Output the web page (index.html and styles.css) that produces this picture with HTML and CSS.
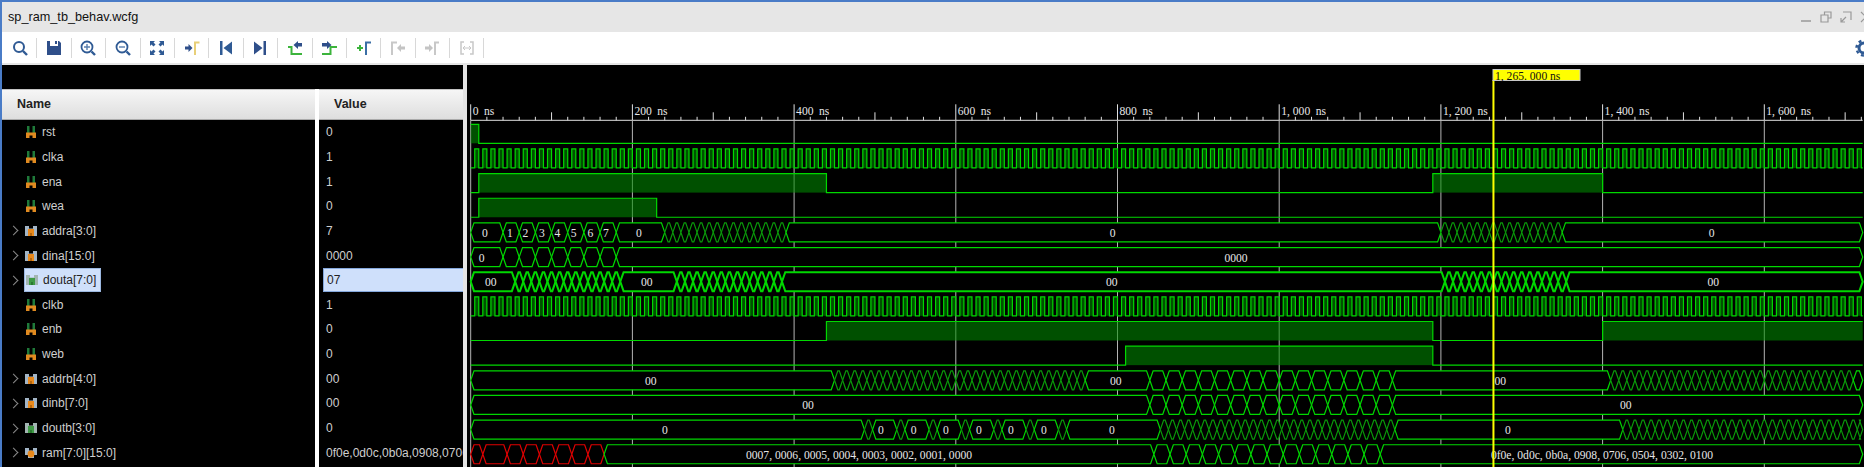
FILE: index.html
```html
<!DOCTYPE html>
<html lang="en">
<head>
  <meta charset="UTF-8" />
  <meta name="viewport" content="width=device-width, initial-scale=1.0" />
  <title>sp_ram_tb_behav.wcfg</title>
  <link rel="stylesheet" href="styles.css">
</head>
<body>

  <svg class="defs" width="0" height="0">
    <symbol id="sig-bit" viewBox="0 0 12 12">
      <path d="M2 0h2.500v7H2zM7.500 0H10v7H7.500z" fill="#1f7a3a"/>
      <path d="M1 6.500h10V12H7.500V9.500h-3V12H1z" fill="#e08a20"/>
    </symbol>
    <symbol id="sig-bus" viewBox="0 0 12 10">
      <path d="M0 0h4v2.500h4V0h4v10H0z" fill="#a3b5c6"/>
      <path d="M3 3h6v7H3z" fill="#e8891c"/>
      <path d="M5 7h2v3H5z" fill="#b5670f"/>
    </symbol>
    <symbol id="sig-out" viewBox="0 0 12 10">
      <path d="M0 0h4v2.500h4V0h4v10H0z" fill="#a3b5b2"/>
      <path d="M3 3h6v7H3z" fill="#3f9a45"/>
      <path d="M5 7h2v3H5z" fill="#2a7a30"/>
    </symbol>
    <symbol id="sig-ram" viewBox="0 0 12 10">
      <path d="M0 0h4v2.500h4V0h4v7H9v3H3V7H0z" fill="#a3b5c6"/>
      <circle cx="6" cy="6" r="3.400" fill="#e8891c"/>
    </symbol>
  </svg>

  <div class="titlebar">
    <span class="title">sp_ram_tb_behav.wcfg</span>
    <div class="win-btns">
      <svg width="12" height="12" viewBox="0 0 12 12"><path d="M1 10h10" stroke="#999" stroke-width="1.5"/></svg>
      <svg width="12" height="12" viewBox="0 0 12 12"><path d="M4.500 3.500V1h6.500v6H8M1 4h7v7H1z" fill="none" stroke="#999" stroke-width="1.200"/></svg>
      <svg width="12" height="12" viewBox="0 0 12 12"><path d="M3 1h8v8M1 11l5-5M1 7v4h4" fill="none" stroke="#999" stroke-width="1.200"/></svg>
      <svg width="12" height="12" viewBox="0 0 12 12"><path d="M1 1l10 10M11 1L1 11" stroke="#999" stroke-width="1.200"/></svg>
    </div>
  </div>

  <div class="toolbar">
    <span class="tool"><svg width="16" height="16" viewBox="0 0 16 16"><circle cx="7" cy="7" r="5" fill="none" stroke="#2f5a94" stroke-width="2"/><path d="M11 11l4 4" stroke="#2f5a94" stroke-width="2.400"/></svg></span>
    <span class="tool"><svg width="16" height="16" viewBox="0 0 16 16"><path d="M1 1h3v5h8V1h1l2 2v12H1z" fill="#2f4f8a"/><path d="M9 1h2v3H9z" fill="#2f4f8a"/></svg></span>
    <span class="tool"><svg width="16" height="16" viewBox="0 0 16 16"><circle cx="7" cy="7" r="5.500" fill="none" stroke="#2f5a94" stroke-width="1.800"/><path d="M11.500 11.500l3.500 3.500" stroke="#2f5a94" stroke-width="2.400"/><path d="M4 7h6M7 4v6" stroke="#5a7fae" stroke-width="1.400"/></svg></span>
    <span class="tool"><svg width="16" height="16" viewBox="0 0 16 16"><circle cx="7" cy="7" r="5.500" fill="none" stroke="#2f5a94" stroke-width="1.800"/><path d="M11.500 11.500l3.500 3.500" stroke="#2f5a94" stroke-width="2.400"/><path d="M4 7h6" stroke="#5a7fae" stroke-width="1.400"/></svg></span>
    <span class="tool"><svg width="16" height="16" viewBox="0 0 16 16"><path d="M1 1h5L4.500 2.500 6.500 4.500 4.500 6.500 2.500 4.500 1 6zM15 1v5l-1.500-1.500-2 2-2-2 2-2L10 1zM1 15v-5l1.500 1.500 2-2 2 2-2 2L6 15zM15 15h-5l1.500-1.500-2-2 2-2 2 2L15 10z" fill="#2f5a94"/></svg></span>
    <span class="tool"><svg width="16" height="16" viewBox="0 0 16 16"><path d="M1 6.500h3.500V4l4 4-4 4V9.500H1z" fill="#2f4f8a"/><path d="M11 15V2.500h4.500" fill="none" stroke="#e8cf78" stroke-width="2"/></svg></span>
    <span class="tool"><svg width="16" height="16" viewBox="0 0 16 16"><path d="M2 1h2.500v14H2zM14 1.500v13L5.500 8z" fill="#2f5a94"/></svg></span>
    <span class="tool"><svg width="16" height="16" viewBox="0 0 16 16"><path d="M14 1h-2.500v14H14zM2 1.500v13L10.500 8z" fill="#2f4f8a"/></svg></span>
    <span class="tool"><svg width="16" height="16" viewBox="0 0 16 16"><path d="M1 7h3.500v7H15" fill="none" stroke="#3cb43c" stroke-width="2"/><path d="M15 3v3.500h-4V9L6.500 5 11 1v2z" fill="#2f4f8a"/></svg></span>
    <span class="tool"><svg width="16" height="16" viewBox="0 0 16 16"><path d="M1 14h8.500V7H16" fill="none" stroke="#3cb43c" stroke-width="2"/><path d="M1 3v3.500h5V9l4.500-4L6 1v2z" fill="#2f4f8a"/></svg></span>
    <span class="tool"><svg width="16" height="16" viewBox="0 0 16 16"><path d="M1 8h6M4 5v6" stroke="#3cb43c" stroke-width="2"/><path d="M10 15V2.500h5" fill="none" stroke="#3a6ea5" stroke-width="2"/></svg></span>
    <span class="tool"><svg width="16" height="16" viewBox="0 0 16 16"><path d="M2 15V2.500h5" fill="none" stroke="#c8c8c8" stroke-width="2"/><path d="M15 6.500v3h-4V12L7 8l4-4v2.500z" fill="#c4c4c4"/></svg></span>
    <span class="tool"><svg width="16" height="16" viewBox="0 0 16 16"><path d="M1 6.500v3h4V12l4-4-4-4v2.500z" fill="#c4c4c4"/><path d="M11 15V2.500h4" fill="none" stroke="#c8c8c8" stroke-width="2"/></svg></span>
    <span class="tool"><svg width="16" height="16" viewBox="0 0 16 16"><path d="M5 2H2v12h3M11 2h3v12h-3" fill="none" stroke="#c8c8c8" stroke-width="1.500"/><path d="M4 8h8M6 6L4 8l2 2M10 6l2 2-2 2" fill="none" stroke="#c8c8c8"/></svg></span>
    <svg class="gear" width="18" height="18" viewBox="0 0 18 18"><circle cx="9" cy="9" r="5" fill="none" stroke="#2f5a94" stroke-width="3"/><circle cx="9" cy="9" r="7.500" fill="none" stroke="#2f5a94" stroke-width="2.500" stroke-dasharray="3 2.900"/></svg>
  </div>

  <div class="panes">
    <div class="names">
      <div class="spacer"></div>
      <div class="col-head">Name</div>
      <div class="row"><span class="chev"></span><svg class="sig" width="12" height="12"><use href="#sig-bit"/></svg><span>rst</span></div>
      <div class="row"><span class="chev"></span><svg class="sig" width="12" height="12"><use href="#sig-bit"/></svg><span>clka</span></div>
      <div class="row"><span class="chev"></span><svg class="sig" width="12" height="12"><use href="#sig-bit"/></svg><span>ena</span></div>
      <div class="row"><span class="chev"></span><svg class="sig" width="12" height="12"><use href="#sig-bit"/></svg><span>wea</span></div>
      <div class="row"><span class="chev open"></span><svg class="sig" width="12" height="10"><use href="#sig-bus"/></svg><span>addra[3:0]</span></div>
      <div class="row"><span class="chev open"></span><svg class="sig" width="12" height="10"><use href="#sig-bus"/></svg><span>dina[15:0]</span></div>
      <div class="row"><span class="chev open"></span><span class="picked"><svg class="sig" width="12" height="10"><use href="#sig-out"/></svg><span>douta[7:0]</span></span></div>
      <div class="row"><span class="chev"></span><svg class="sig" width="12" height="12"><use href="#sig-bit"/></svg><span>clkb</span></div>
      <div class="row"><span class="chev"></span><svg class="sig" width="12" height="12"><use href="#sig-bit"/></svg><span>enb</span></div>
      <div class="row"><span class="chev"></span><svg class="sig" width="12" height="12"><use href="#sig-bit"/></svg><span>web</span></div>
      <div class="row"><span class="chev open"></span><svg class="sig" width="12" height="10"><use href="#sig-bus"/></svg><span>addrb[4:0]</span></div>
      <div class="row"><span class="chev open"></span><svg class="sig" width="12" height="10"><use href="#sig-bus"/></svg><span>dinb[7:0]</span></div>
      <div class="row"><span class="chev open"></span><svg class="sig" width="12" height="10"><use href="#sig-out"/></svg><span>doutb[3:0]</span></div>
      <div class="row"><span class="chev open"></span><svg class="sig" width="12" height="10"><use href="#sig-ram"/></svg><span>ram[7:0][15:0]</span></div>
    </div>

    <div class="values">
      <div class="spacer"></div>
      <div class="col-head">Value</div>
      <div class="row val">0</div>
      <div class="row val">1</div>
      <div class="row val">1</div>
      <div class="row val">0</div>
      <div class="row val">7</div>
      <div class="row val">0000</div>
      <div class="row val picked-val">07</div>
      <div class="row val">1</div>
      <div class="row val">0</div>
      <div class="row val">0</div>
      <div class="row val">00</div>
      <div class="row val">00</div>
      <div class="row val">0</div>
      <div class="row val">0f0e,0d0c,0b0a,0908,0706,0504,0302,0100</div>
    </div>

    <svg id="wave" class="wave" viewBox="467 65 1397 402" width="1397" height="402"></svg>
  </div>

  <script src="wave.js"></script>
</body>
</html>
```

FILE: styles.css
```css
* {
  box-sizing: border-box;
}
html, body {
  height: 100%;
}
body {
  margin: 0;
  overflow: hidden;
  border-top: 2px solid #4a7cc7;
  border-left: 2px solid #4a7cc7;
  font-family: "Liberation Sans", Arial, sans-serif;
  background: #e6e6e6;
  display: flex;
  flex-direction: column;
}
.defs {
  position: absolute;
}
.titlebar {
  height: 30px;
  flex: none;
  display: flex;
  align-items: center;
  justify-content: space-between;
  padding-left: 6px;
  background: #e6e6e6;
}
.title {
  font-size: 12.7px;
  color: #111;
}
.win-btns {
  display: flex;
  gap: 8px;
  margin-right: -8px;
}
.toolbar {
  height: 31px;
  flex: none;
  display: flex;
  align-items: center;
  background: white;
  padding-left: 1px;
}
.tool {
  width: 34.4px;
  height: 20px;
  flex: none;
  display: flex;
  align-items: center;
  justify-content: center;
  border-right: 1px solid #d8d8d8;
}
.gear {
  margin-left: auto;
  margin-right: -9px;
}
.panes {
  flex: 1;
  margin-top: 2px;
  display: flex;
  background: #000;
  min-height: 0;
}
.names {
  width: 313px;
  flex: none;
  background: #000;
}
.values {
  width: 148px;
  flex: none;
  border-left: 4px solid #fff;
  background: #000;
}
.spacer {
  height: 24px;
  background: #000;
}
.values .spacer {
  margin-left: -4px;
}
.col-head {
  height: 31px;
  padding-top: 7px;
  font-size: 12.5px;
  font-weight: bold;
  color: #222;
  background: linear-gradient(#f6f6f6, #dedede);
  border-top: 1px solid #c4c4c4;
  border-bottom: 1px solid #aaa;
}
.names .col-head {
  padding-left: 15px;
}
.values .col-head {
  padding-left: 15px;
}
.row {
  height: 24.65px;
  display: flex;
  align-items: center;
  font-size: 12px;
  color: #cfcfcf;
  white-space: nowrap;
  overflow: hidden;
}
.chev {
  width: 23px;
  flex: none;
  position: relative;
  height: 10px;
}
.chev.open::before {
  content: "";
  position: absolute;
  left: 8px;
  top: 1.5px;
  width: 6px;
  height: 6px;
  border-top: 1.2px solid #8a8a8a;
  border-right: 1.2px solid #8a8a8a;
  transform: rotate(45deg);
}
.sig {
  flex: none;
  margin-right: 5px;
}
.picked {
  display: flex;
  align-items: center;
  margin-left: -1px;
  height: 24px;
  padding: 0 4px 0 1px;
  color: #222;
  background: #cfe0fb;
  border: 1px solid #9cb8e0;
}
.val {
  padding-left: 7px;
}
.picked-val {
  margin-left: 4px;
  padding-left: 3px;
  color: #222;
  background: #cfe0fb;
  border: 1px solid #85a8dc;
  border-right: 0;
}
.wave {
  flex: none;
  display: block;
  border-left: 4px solid #e4e4e4;
  box-sizing: content-box;
}
.ruler-label, .bus-label {
  font-family: "Liberation Serif", serif;
  font-size: 11.6px;
  fill: #e6e6e6;
}
.cursor-label {
  font-family: "Liberation Serif", serif;
  font-size: 11.6px;
  fill: #111;
}
```

FILE: wave.js
```js
// waveform canvas, everything here is in page coordinates (see the viewBox)
const svg = document.getElementById('wave');
const X0 = 470.7, END = 1862.7, NS = 0.8085;
const T_END = (END - X0) / NS;
const ROW_TOP = 124.3, ROW_STEP = 24.65, ROW_H = 19;
const SLOPE = 3.3;
const GREEN = '#00d800', DIM = '#0a9a0a', RED = '#e00000';

const px = t => X0 + t * NS;
const rowTop = i => ROW_TOP + ROW_STEP * i;

function add(tag, attrs, text) {
  const el = document.createElementNS('http://www.w3.org/2000/svg', tag);
  for (const k in attrs) el.setAttribute(k, attrs[k]);
  if (text) el.textContent = text;
  svg.appendChild(el);
  return el;
}

function range(a, b, step) {
  const out = [];
  for (let t = a; t <= b; t += step) out.push(t);
  return out;
}

function drawRuler() {
  add('path', { d: `M${X0} 120.3H${END}`, stroke: '#e0e0e0', fill: 'none' });
  for (let t = 0; px(t) <= END; t += 20) {
    const h = t % 200 === 0 ? 16 : t % 100 === 0 ? 8 : 3.5;
    add('path', { d: `M${px(t)} 120.3v${-h}`, stroke: '#e0e0e0' });
  }
  for (let t = 0; px(t) <= END; t += 200) {
    const x = px(t);
    add('path', { d: `M${x} 120.3V467`, stroke: '#b4b4b4' });
    const num = t < 1000 ? String(t) : '1, ' + String(t).slice(1);
    const label = add('text', { class: 'ruler-label', x: x + 2, y: 114.5 }, num);
    const unit = document.createElementNS('http://www.w3.org/2000/svg', 'tspan');
    unit.setAttribute('dx', 5.5);
    unit.textContent = 'ns';
    label.appendChild(unit);
  }
}

function drawBit(i, start, edges) {
  const hi = rowTop(i), lo = hi + ROW_H;
  let level = start, from = 0;
  let d = `M${X0} ${level ? hi : lo}`;
  for (const t of [...edges, T_END]) {
    if (level) add('rect', { x: px(from), y: hi, width: (t - from) * NS, height: ROW_H, fill: 'rgba(0,140,0,.57)' });
    d += `H${px(t)}`;
    if (t !== T_END) {
      level = level ? 0 : 1;
      d += `V${level ? hi : lo}`;
    }
    from = t;
  }
  add('path', { d, fill: 'none', stroke: GREEN, 'stroke-width': 1.2 });
}

function drawBus(i, changes, labels, opts = {}) {
  const hi = rowTop(i), lo = hi + ROW_H, mid = hi + ROW_H / 2;
  const cuts = [0, ...changes, T_END];
  for (let n = 0; n < cuts.length - 1; n++) {
    const a = px(cuts[n]), b = px(cuts[n + 1]);
    const narrow = cuts[n + 1] - cuts[n] <= 10;
    let stroke = narrow && !opts.bold ? DIM : GREEN;
    if (opts.redUntil && cuts[n + 1] <= opts.redUntil) stroke = RED;
    const pts = [[a, mid], [a + SLOPE, hi], [b - SLOPE, hi], [b, mid], [b - SLOPE, lo], [a + SLOPE, lo]];
    add('polygon', {
      points: pts.map(p => p.join(',')).join(' '),
      fill: '#000', stroke, 'stroke-width': opts.bold ? 2 : 1.2
    });
  }
  for (const [x, text] of labels) {
    add('text', { class: 'bus-label', x, y: mid + 4.5, 'text-anchor': 'middle' }, text);
  }
}

function drawCursor() {
  const x = px(1265);
  add('path', { d: `M${x} 80V467`, stroke: '#ffff00', 'stroke-width': 2 });
  add('rect', { x: 1493, y: 69.5, width: 87, height: 11, fill: '#ffff00', stroke: '#c8c8c8' });
  add('text', { class: 'cursor-label', x: 1495, y: 79.5 }, '1, 265. 000 ns');
}

const clock = range(5, T_END, 5);

drawRuler();
drawBit(0, 1, [10]);
drawBit(1, 0, clock);
drawBit(2, 0, [10, 440, 1190, 1400]);
drawBit(3, 0, [10, 230]);
drawBus(4, [...range(40, 180, 20), ...range(240, 390, 10), ...range(1200, 1350, 10)], [
  [485, '0'], [510, '1'], [525.3, '2'], [542, '3'], [557.3, '4'], [573.7, '5'], [590.3, '6'], [606, '7'],
  [639, '0'], [1112.7, '0'], [1711.7, '0']
]);
drawBus(5, range(40, 180, 20), [[481.7, '0'], [1236, '0000']]);
drawBus(6, [...range(55, 185, 10), ...range(255, 385, 10), ...range(1205, 1355, 10)], [
  [490.7, '00'], [646.7, '00'], [1111.7, '00'], [1713.3, '00']
], { bold: true });
drawBit(7, 0, clock);
drawBit(8, 0, [440, 1190, 1400]);
drawBit(9, 0, [810, 1190]);
drawBus(10, [...range(450, 760, 10), ...range(840, 1140, 20), ...range(1410, 1710, 10)], [
  [650.7, '00'], [1115.7, '00'], [1500.3, '00']
]);
drawBus(11, range(840, 1140, 20), [[808, '00'], [1625.7, '00']]);
const pairs = range(487, 727, 40).flatMap(t => [t, t + 10]);
drawBus(12, [...pairs, ...range(853, 1143, 10), ...range(1425, 1715, 10)], [
  [665, '0'], [881, '0'], [913.7, '0'], [946, '0'], [979, '0'], [1011, '0'], [1044, '0'], [1112, '0'], [1508, '0']
]);
drawBus(13, [15, ...range(45, 165, 20), ...range(845, 1125, 20)], [
  [859, '0007, 0006, 0005, 0004, 0003, 0002, 0001, 0000'],
  [1602, '0f0e, 0d0c, 0b0a, 0908, 0706, 0504, 0302, 0100']
], { redUntil: 165 });
drawCursor();
```
